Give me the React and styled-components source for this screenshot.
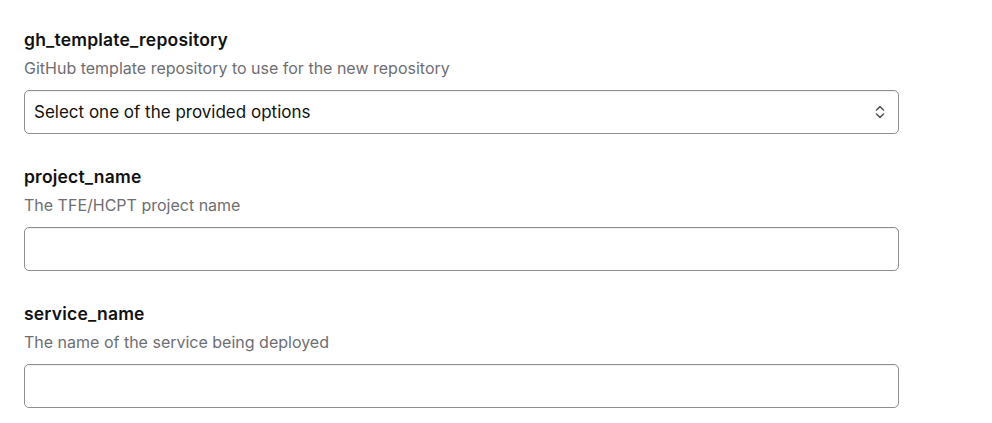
import React from "react";
import styled, { createGlobalStyle } from "styled-components";

const Global = createGlobalStyle`
  html, body { margin: 0; padding: 0; background: #fff; }
  body { font-family: Inter, "Noto Sans", sans-serif; -webkit-font-smoothing: antialiased; }
`;

const Page = styled.div`
  padding: 28px 0 0 24px;
  display: flex;
  flex-direction: column;
  gap: 31px;
`;

const Field = styled.div`
  width: 875px;
  display: flex;
  flex-direction: column;
`;

const Label = styled.label`
  font-size: 17.5px;
  line-height: 24px;
  font-weight: 600;
  letter-spacing: 0.2px;
  color: #111;
`;

const Desc = styled.div`
  margin-top: 6px;
  font-size: 16px;
  line-height: 20px;
  color: #6e6e73;
`;

const Box = styled.div`
  margin-top: 12px;
  height: 44px;
  box-sizing: border-box;
  border: 1px solid #8d8d92;
  border-radius: 5px;
  box-shadow: inset 0 1px 1px rgba(0,0,0,0.06);
  display: flex;
  align-items: center;
  justify-content: space-between;
  padding: 0 12px 0 9px;
  font-size: 17px;
  color: #111;
`;

const Chevron = () => (
  <svg width="12" height="16" viewBox="0 0 12 16" fill="none" stroke="#555" strokeWidth="1.6" strokeLinecap="round" strokeLinejoin="round">
    <path d="M2.5 6 L6 2.5 L9.5 6" />
    <path d="M2.5 10 L6 13.5 L9.5 10" />
  </svg>
);

export default function App() {
  return (
    <>
      <Global />
      <Page>
        <Field>
          <Label>gh_template_repository</Label>
          <Desc>GitHub template repository to use for the new repository</Desc>
          <Box>
            <span>Select one of the provided options</span>
            <Chevron />
          </Box>
        </Field>
        <Field>
          <Label>project_name</Label>
          <Desc>The TFE/HCPT project name</Desc>
          <Box />
        </Field>
        <Field>
          <Label>service_name</Label>
          <Desc>The name of the service being deployed</Desc>
          <Box />
        </Field>
      </Page>
    </>
  );
}
